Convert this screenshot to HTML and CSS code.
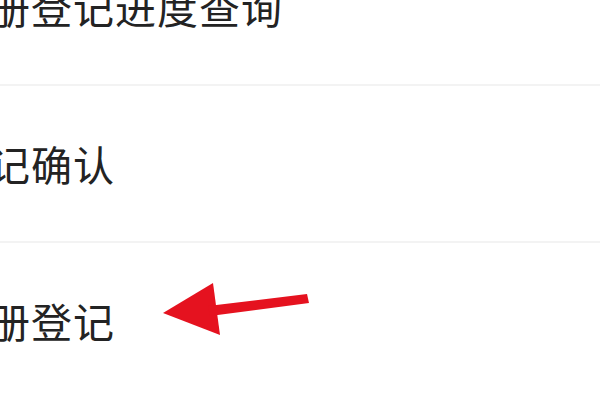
FILE: index.html
```html
<!DOCTYPE html>
<html lang="zh-CN">
<head>
<meta charset="utf-8">
<link rel="stylesheet" href="styles.css">
</head>
<body>
<div class="list">
  <div class="row"><span class="label">册登记进度查询</span></div>
  <div class="row"><span class="label">记确认</span></div>
  <div class="row last"><span class="label">册登记</span>
    <svg class="arrow" width="170" height="70" viewBox="0 0 170 70">
      <polygon points="13,38 63,8 70,60" fill="#e5121f"/>
      <polygon points="58,31 157,19 159,28 60,41" fill="#e5121f"/>
    </svg>
  </div>
</div>
</body>
</html>
```
FILE: styles.css
```css
html, body {
  margin: 0;
  padding: 0;
  background: #ffffff;
  width: 600px;
  height: 400px;
  overflow: hidden;
}
.list {
  margin-top: -71px;
  margin-left: -11px;
  display: flex;
  flex-direction: column;
}
.row {
  position: relative;
  height: 155px;
  display: flex;
  align-items: center;
  border-bottom: 2px solid #f3f3f3;
}
.row.last {
  border-bottom: none;
}
.label {
  font-family: "Noto Sans CJK SC", "Noto Sans", sans-serif;
  font-size: 41px;
  color: #232323;
  letter-spacing: 1px;
  line-height: 1;
}
.arrow {
  position: absolute;
  left: 161px;
  top: 32px;
}
```
